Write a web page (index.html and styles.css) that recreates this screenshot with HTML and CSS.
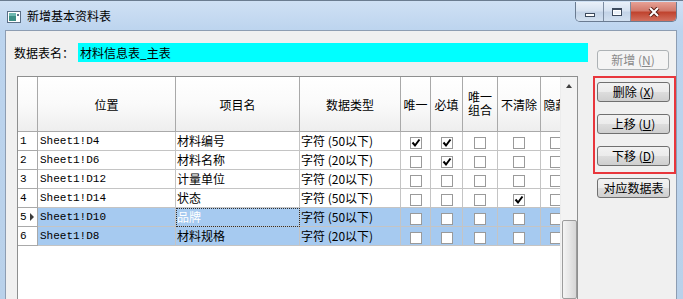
FILE: index.html
```html
<!DOCTYPE html>
<html lang="zh-CN">
<head>
    <meta charset="UTF-8">
    <title>新增基本资料表</title>
    <link rel="stylesheet" href="styles.css">
</head>
<body>
    <div class="window">
        <!-- 标题栏 -->
        <div class="titlebar">
            <svg class="app-icon" width="14" height="12" viewBox="0 0 14 12">
                <rect x="0.5" y="0.5" width="13" height="11" fill="#fff" stroke="#5b6f86"/>
                <rect x="2" y="2" width="7" height="8" fill="#3d8f86"/>
                <rect x="2" y="2" width="7" height="3" fill="#6fb8b0"/>
                <rect x="10" y="3" width="2" height="2" fill="#5b6f86"/>
            </svg>
            <span class="title">新增基本资料表</span>
            <div class="cap-btns">
                <div class="cap cap-min"><span class="glyph-min"></span></div>
                <div class="cap cap-max"><span class="glyph-max"></span></div>
                <div class="cap cap-close">
                    <svg width="14" height="10" viewBox="0 0 14 10">
                        <path d="M3 1 L11 9 M11 1 L3 9" stroke="#5a1d15" stroke-width="4"/>
                        <path d="M3 1 L11 9 M11 1 L3 9" stroke="#fff" stroke-width="2"/>
                    </svg>
                </div>
            </div>
        </div>

        <div class="client">
            <div class="main">
                <div class="name-row">
                    <span class="name-label">数据表名：</span>
                    <div class="name-input">材料信息表_主表</div>
                </div>

                <div class="grid">
                    <div class="grid-view">
                        <table class="sheet">
                            <thead>
                                <tr>
                                    <th class="w-rh"></th>
                                    <th class="w-pos">位置</th>
                                    <th class="w-name">项目名</th>
                                    <th class="w-type">数据类型</th>
                                    <th class="w-uniq">唯一</th>
                                    <th class="w-req">必填</th>
                                    <th class="w-combo"><span class="two-line">唯一<br>组合</span></th>
                                    <th class="w-keep">不清除</th>
                                    <th class="w-hide">隐藏</th>
                                </tr>
                            </thead>
                            <tbody>
                                <tr>
                                    <td class="rh">1</td>
                                    <td class="pos">Sheet1!D4</td>
                                    <td class="txt">材料编号</td>
                                    <td class="txt">字符 (50以下)</td>
                                    <td><span class="box on"><svg width="10" height="10" viewBox="0 0 10 10"><path d="M1.5 4.5 L4 7.5 L8.5 1.5" fill="none" stroke="#000" stroke-width="2"/></svg></span></td>
                                    <td><span class="box on"><svg width="10" height="10" viewBox="0 0 10 10"><path d="M1.5 4.5 L4 7.5 L8.5 1.5" fill="none" stroke="#000" stroke-width="2"/></svg></span></td>
                                    <td><span class="box"></span></td>
                                    <td><span class="box"></span></td>
                                    <td><span class="box"></span></td>
                                </tr>
                                <tr>
                                    <td class="rh">2</td>
                                    <td class="pos">Sheet1!D6</td>
                                    <td class="txt">材料名称</td>
                                    <td class="txt">字符 (20以下)</td>
                                    <td><span class="box"></span></td>
                                    <td><span class="box on"><svg width="10" height="10" viewBox="0 0 10 10"><path d="M1.5 4.5 L4 7.5 L8.5 1.5" fill="none" stroke="#000" stroke-width="2"/></svg></span></td>
                                    <td><span class="box"></span></td>
                                    <td><span class="box"></span></td>
                                    <td><span class="box"></span></td>
                                </tr>
                                <tr>
                                    <td class="rh">3</td>
                                    <td class="pos">Sheet1!D12</td>
                                    <td class="txt">计量单位</td>
                                    <td class="txt">字符 (20以下)</td>
                                    <td><span class="box"></span></td>
                                    <td><span class="box"></span></td>
                                    <td><span class="box"></span></td>
                                    <td><span class="box"></span></td>
                                    <td><span class="box"></span></td>
                                </tr>
                                <tr>
                                    <td class="rh">4</td>
                                    <td class="pos">Sheet1!D14</td>
                                    <td class="txt">状态</td>
                                    <td class="txt">字符 (50以下)</td>
                                    <td><span class="box"></span></td>
                                    <td><span class="box"></span></td>
                                    <td><span class="box"></span></td>
                                    <td><span class="box on"><svg width="10" height="10" viewBox="0 0 10 10"><path d="M1.5 4.5 L4 7.5 L8.5 1.5" fill="none" stroke="#000" stroke-width="2"/></svg></span></td>
                                    <td><span class="box"></span></td>
                                </tr>
                                <tr class="sel">
                                    <td class="rh">5<span class="row-mark"></span></td>
                                    <td class="pos">Sheet1!D10</td>
                                    <td class="txt focus">品牌</td>
                                    <td class="txt">字符 (50以下)</td>
                                    <td><span class="box"></span></td>
                                    <td><span class="box"></span></td>
                                    <td><span class="box"></span></td>
                                    <td><span class="box"></span></td>
                                    <td><span class="box"></span></td>
                                </tr>
                                <tr class="sel">
                                    <td class="rh">6</td>
                                    <td class="pos">Sheet1!D8</td>
                                    <td class="txt">材料规格</td>
                                    <td class="txt">字符 (20以下)</td>
                                    <td><span class="box"></span></td>
                                    <td><span class="box"></span></td>
                                    <td><span class="box"></span></td>
                                    <td><span class="box"></span></td>
                                    <td><span class="box"></span></td>
                                </tr>
                            </tbody>
                        </table>
                    </div>
                    <div class="vscroll">
                        <div class="sb-up"><span class="arrow-up"></span></div>
                        <div class="sb-thumb"></div>
                    </div>
                </div>
            </div>

            <div class="side">
                <button class="btn" disabled>新增 (<u>N</u>)</button>
                <div class="highlight">
                    <button class="btn">删除 (<u>X</u>)</button>
                    <button class="btn">上移 (<u>U</u>)</button>
                    <button class="btn">下移 (<u>D</u>)</button>
                </div>
                <button class="btn btn-map">对应数据表</button>
            </div>
        </div>
    </div>
</body>
</html>
```

FILE: styles.css
```css
* {
    box-sizing: border-box;
}

body {
    margin: 0;
    width: 683px;
    height: 299px;
    overflow: hidden;
    font-family: "Noto Sans CJK SC", "Liberation Sans", sans-serif;
    font-size: 12px;
    color: #000;
}

.window {
    height: 299px;
    overflow: hidden;
    display: flex;
    flex-direction: column;
    padding: 0 6px 0 5px;
    border-top: 1px solid #6b7c90;
    background: linear-gradient(180deg, #cfe0f4 0px, #bcd4ee 30px, #b9d1ea 100%);
}

/* 标题栏 */
.titlebar {
    height: 29px;
    display: flex;
    align-items: center;
    flex-shrink: 0;
}

.app-icon {
    margin-left: 2px;
    margin-top: 2px;
}

.title {
    margin-left: 6px;
    color: #000;
}

.cap-btns {
    margin-left: auto;
    align-self: flex-start;
    margin-top: 1px;
    display: flex;
    border: 1px solid #6a7b91;
    border-top: none;
    border-radius: 0 0 5px 5px;
    overflow: hidden;
}

.cap {
    height: 19px;
    display: flex;
    align-items: center;
    justify-content: center;
    background: linear-gradient(180deg, #e9f0f9 0%, #d6e2f1 45%, #c3d3e7 55%, #d2e0f0 100%);
}

.cap-min {
    width: 28px;
    border-right: 1px solid #7c8ca1;
    align-items: flex-end;
    padding-bottom: 4px;
}

.cap-max {
    width: 27px;
    border-right: 1px solid #7c8ca1;
}

.cap-close {
    width: 45px;
    background: linear-gradient(180deg, #e7a195 0%, #d27a6c 45%, #c0442f 55%, #d2705f 100%);
}

.glyph-min {
    width: 10px;
    height: 4px;
    background: #fff;
    border: 1px solid #3d4b5e;
}

.glyph-max {
    width: 10px;
    height: 8px;
    border: 1px solid #3d4b5e;
    border-top-width: 2px;
    background: #eaf1f9;
    box-shadow: inset 0 0 0 1px #fff;
}

/* 客户区 */
.client {
    flex: 1;
    min-height: 0;
    display: flex;
    background: #f0f0f0;
    border: 1px solid #8d9db2;
    border-bottom: none;
    padding: 12px 0 0 8px;
}

.main {
    width: 574px;
    display: flex;
    flex-direction: column;
}

.name-row {
    display: flex;
    align-items: center;
    height: 19px;
}

.name-label {
    width: 64px;
}

.name-input {
    flex: 1;
    height: 19px;
    line-height: 19px;
    padding-left: 2px;
    background: #00ffff;
}

/* 表格 */
.grid {
    margin: 14px 0 0 3px;
    width: 561px;
    height: 224px;
    display: flex;
    border: 1px solid #8e8f8f;
    background: #fff;
}

.grid-view {
    width: 543px;
    overflow: hidden;
}

.sheet {
    table-layout: fixed;
    width: 553px;
    border-collapse: separate;
    border-spacing: 0;
}

.sheet th,
.sheet td {
    padding: 0;
    white-space: nowrap;
    overflow: hidden;
    border-right: 1px solid #c4c4c4;
    border-bottom: 1px solid #c4c4c4;
}

.sheet th {
    height: 55px;
    font-weight: normal;
    text-align: center;
    vertical-align: middle;
    background: linear-gradient(180deg, #ffffff 0%, #fafafa 50%, #eeeeee 100%);
    border-color: #a9a9a9;
}

.w-rh { width: 20px; }
.w-pos { width: 138px; }
.w-name { width: 124px; }
.w-type { width: 101px; }
.w-uniq { width: 30px; }
.w-req { width: 32px; }
.w-combo { width: 35px; }
.w-keep { width: 43px; }
.w-hide { width: 30px; }

.two-line {
    display: inline-block;
    line-height: 13px;
}

.sheet td {
    height: 19px;
    line-height: 18px;
    vertical-align: top;
}

.sheet td.rh {
    padding-left: 2px;
    font-family: "Liberation Mono", monospace;
    font-size: 11px;
    background: #fff;
    border-color: #a9a9a9;
}

.row-mark {
    display: inline-block;
    width: 0;
    height: 0;
    margin-left: 3px;
    border-left: 4px solid #3c3c3c;
    border-top: 4px solid transparent;
    border-bottom: 4px solid transparent;
    vertical-align: -1px;
}

.sheet td.pos {
    padding-left: 2px;
    font-family: "Liberation Mono", monospace;
    font-size: 11px;
}

.sheet td.txt {
    padding-left: 1px;
}

.sheet tr.sel td {
    background: #a6caf0;
}

.sheet tr.sel td.rh {
    background: #fff;
}

.sheet td.focus {
    color: #fff;
    outline: 1px dotted #303030;
    outline-offset: -1px;
}

.box {
    display: block;
    width: 12px;
    height: 12px;
    margin: 5px auto 0;
    border: 1px solid #9a9a9a;
    background: #fff;
}

.box svg {
    display: block;
}

/* 滚动条 */
.vscroll {
    width: 17px;
    background: #f3f3f3;
    border-left: 1px solid #ececec;
    display: flex;
    flex-direction: column;
}

.sb-up {
    height: 17px;
    display: flex;
    justify-content: center;
    padding-top: 7px;
}

.arrow-up {
    width: 0;
    height: 0;
    border-left: 3px solid transparent;
    border-right: 3px solid transparent;
    border-bottom: 4px solid #404040;
}

.sb-thumb {
    margin: 127px 0 0 1px;
    width: 15px;
    height: 90px;
    border: 1px solid #9c9c9c;
    border-radius: 2px;
    background: linear-gradient(90deg, #f4f4f4 0%, #e6e6e6 50%, #d6d6d6 100%);
}

/* 右侧按钮 */
.side {
    width: 83px;
    margin-left: 5px;
    display: flex;
    flex-direction: column;
}

.btn {
    display: block;
    width: 73px;
    height: 20px;
    margin-left: 4px;
    padding: 0;
    font-family: "Noto Sans CJK SC", "Liberation Sans", sans-serif;
    font-size: 12px;
    line-height: 18px;
    color: #000;
    border: 1px solid #707070;
    border-radius: 3px;
    background: linear-gradient(180deg, #f2f2f2 0%, #ebebeb 50%, #dddddd 50%, #cfcfcf 100%);
}

.btn:disabled {
    width: 72px;
    margin-top: 7px;
    color: #8a8a8a;
    border-color: #adb2b5;
    background: #f4f4f4;
}

.highlight {
    margin-top: 6px;
    height: 98px;
    border: 2px solid #e8363c;
    padding: 4px 0 0 2px;
    display: flex;
    flex-direction: column;
    gap: 12px;
}

.highlight .btn {
    margin-left: 0;
}

.btn-map {
    margin-top: 4px;
}
```
